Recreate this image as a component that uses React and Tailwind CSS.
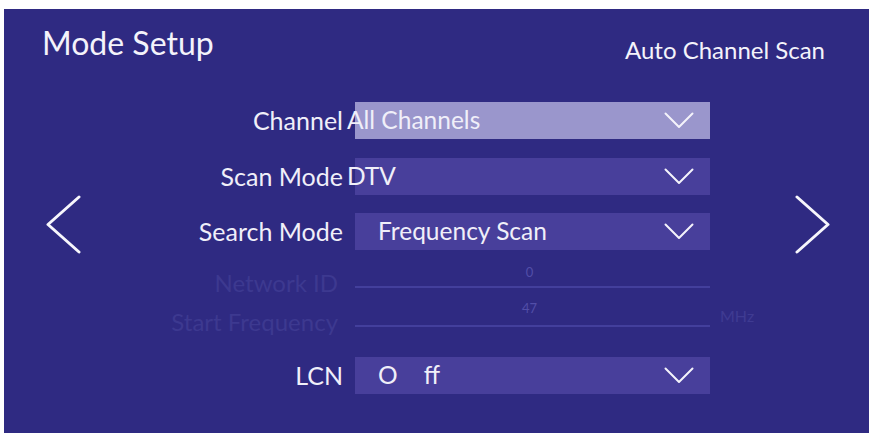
import React from 'react'

const font = { fontFamily: 'Lato, "Noto Sans", sans-serif' }

function Chevron() {
    return (
        <svg width="30" height="17" viewBox="0 0 30 17" className="shrink-0">
            <polyline points="1.5,1.5 15,15 28.5,1.5" fill="none" stroke="#f4f3fb" strokeWidth="2" strokeLinecap="round" strokeLinejoin="round" />
        </svg>
    )
}

function NavArrow({ dir }) {
    const pts = dir === 'left' ? '34,2 3,29.5 34,57' : '2,2 33,29.5 2,57'
    return (
        <svg width="36" height="59" viewBox="0 0 36 59">
            <polyline points={pts} fill="none" stroke="#f7f6fc" strokeWidth="3" strokeLinecap="round" strokeLinejoin="round" />
        </svg>
    )
}

function SelectRow({ label, value, active, shift, valueGap }) {
    return (
        <>
            <div className="flex items-center justify-end text-[25px] text-[#f0eff9] whitespace-nowrap">{label}</div>
            <div className={`flex h-[37px] items-center justify-between pr-[16px] ${active ? 'bg-[#9a96cc]' : 'bg-[#483f9b]'} ${shift ? 'pl-0' : 'pl-[23px]'}`}>
                <span className={`text-[24.5px] text-[#f0eff9] whitespace-nowrap ${shift ? '-ml-[8px]' : ''}`}>
                    {valueGap ? (
                        <>
                            <span>{value[0]}</span>
                            <span className="ml-[26px]">{value[1]}</span>
                        </>
                    ) : value}
                </span>
                <Chevron />
            </div>
            <div />
        </>
    )
}

function InputRow({ label, value, unit, tall }) {
    return (
        <>
            <div className={`flex items-end justify-end pr-[5px] ${tall ? 'h-[39px]' : 'h-[37px]'}`}>
                <span className="translate-y-[13px] text-[24px] text-[#3d3990] whitespace-nowrap">{label}</span>
            </div>
            <div className={`flex items-end justify-center border-b-2 border-[#433f9c] ${tall ? 'pb-[6px]' : 'pb-[3px]'}`}>
                <span className="-ml-[6px] text-[13px] text-[#524ea8]">{value}</span>
            </div>
            <div className="flex items-end">
                {unit && <span className="-ml-[2px] translate-y-[1px] text-[16px] text-[#3f3b92]">{unit}</span>}
            </div>
        </>
    )
}

export default function App() {
    return (
        <div className="w-[873px] h-[435px] bg-white pl-[4px] pt-[9px]" style={font}>
            <div className="flex h-[424px] w-[865px] flex-col bg-[#2f2a82]">
                <div className="flex h-[61px] items-start justify-between pl-[38px] pr-[44px] pt-[18px] leading-none text-[#f4f3fb]">
                    <span className="text-[32px]">Mode Setup</span>
                    <span className="mt-[11px] text-[24px]">Auto Channel Scan</span>
                </div>

                <div className="mt-[32px] flex">
                    <div className="w-[120px] pl-[41px] pt-[93px]">
                        <NavArrow dir="left" />
                    </div>

                    <div className="grid grid-cols-[219px_355px_60px] gap-x-[12px]">
                        <SelectRow label="Channel" value="All Channels" active shift />
                        <div className="col-span-3 h-[18px]" />
                        <SelectRow label="Scan Mode" value="DTV" shift />
                        <div className="col-span-3 h-[18px]" />
                        <SelectRow label="Search Mode" value="Frequency Scan" />
                        <InputRow label="Network ID" value="0" />
                        <InputRow label="Start Frequency" value="47" unit="MHz" tall />
                        <div className="col-span-3 h-[30px]" />
                        <SelectRow label="LCN" value={['O', 'ff']} valueGap />
                    </div>

                    <div className="pl-[13px] pt-[93px]">
                        <NavArrow dir="right" />
                    </div>
                </div>
            </div>
        </div>
    )
}
